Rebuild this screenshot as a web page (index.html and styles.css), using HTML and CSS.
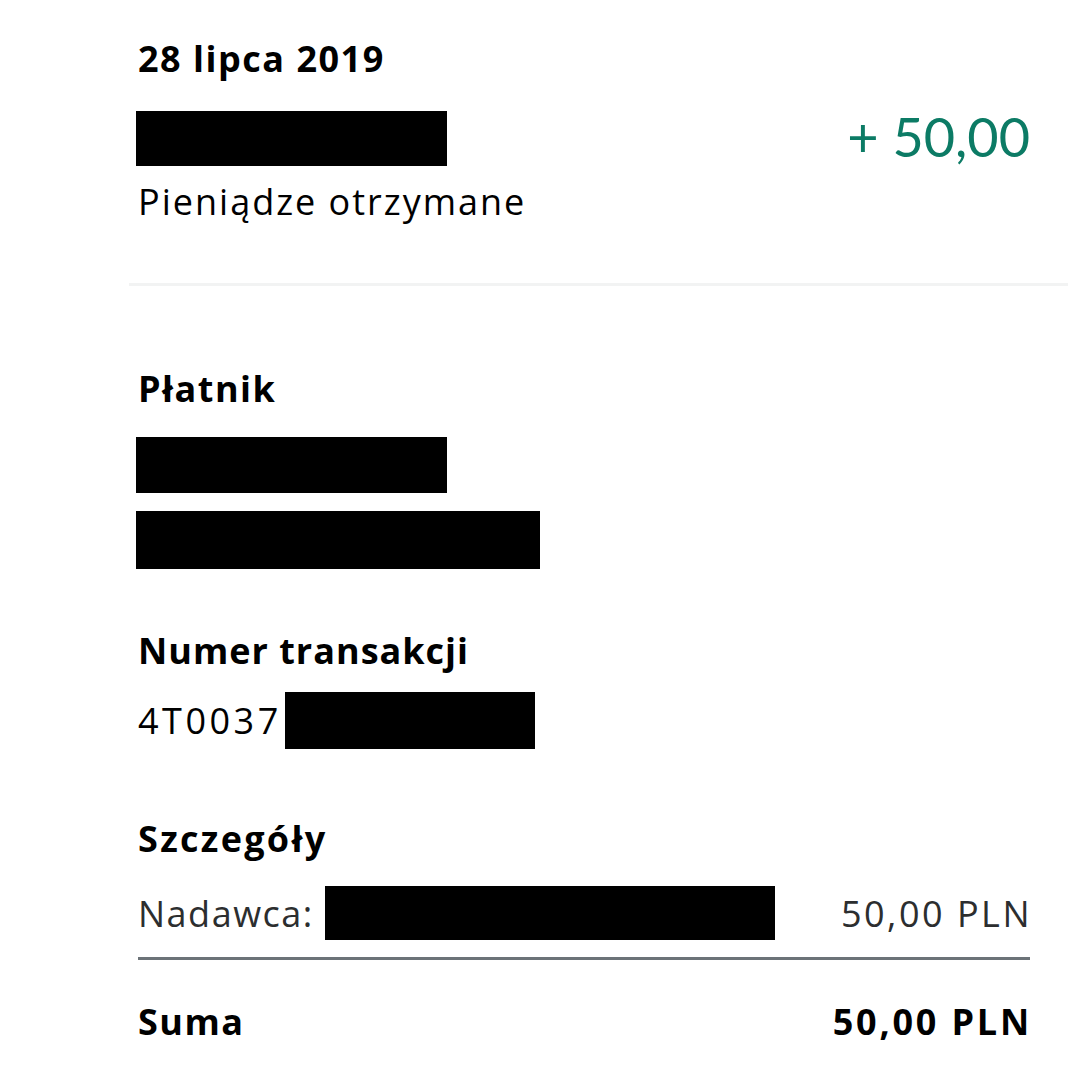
FILE: index.html
```html
<!DOCTYPE html>
<html lang="pl">
<head>
<meta charset="utf-8">
<link rel="stylesheet" href="styles.css">
</head>
<body>
<div class="page">
  <section class="summary">
    <h1 class="date">28 lipca 2019</h1>
    <div class="summary-row">
      <div class="summary-left">
        <div class="redact redact-name"></div>
        <div class="status">Pieniądze otrzymane</div>
      </div>
      <div class="amount">+ 50,00</div>
    </div>
  </section>
  <hr class="divider">
  <section class="block block-payer">
    <h2 class="label">Płatnik</h2>
    <div class="redact redact-a"></div>
    <div class="redact redact-b"></div>
  </section>
  <section class="block block-txn">
    <h2 class="label label-tight">Numer transakcji</h2>
    <div class="txn"><span class="txn-id">4T0037</span><span class="redact redact-txn"></span></div>
  </section>
  <section class="block block-details">
    <h2 class="label label-wide">Szczegóły</h2>
    <div class="detail-row">
      <div class="detail-left"><span class="detail-name">Nadawca:</span><span class="redact redact-sender"></span></div>
      <span class="money">50,00 PLN</span>
    </div>
    <div class="total-row">
      <span class="total-label">Suma</span>
      <span class="money money-bold">50,00 PLN</span>
    </div>
  </section>
</div>
</body>
</html>
```
FILE: styles.css
```css
* { box-sizing: border-box; }
body {
  margin: 0;
  background: #fff;
  font-family: "Open Sans", Lato, sans-serif;
  color: #000;
}
.page {
  width: 1080px;
  height: 1081px;
  overflow: hidden;
  padding: 0 50px 0 138px;
}
.summary { padding-top: 37px; }
.date, .label {
  margin: 0;
  font-size: 36px;
  font-weight: 700;
  line-height: 44px;
  letter-spacing: 1.5px;
}
.label-tight { letter-spacing: 1px; }
.label-wide { letter-spacing: 2.3px; }
.summary-row {
  display: flex;
  justify-content: space-between;
  align-items: flex-start;
  margin-top: 30px;
}
.redact { background: #000; display: block; }
.redact-name { width: 311px; height: 55px; margin-left: -2px; }
.status {
  font-size: 36px;
  line-height: 44px;
  letter-spacing: 2px;
  margin-top: 14px;
}
.amount {
  color: #0c7b65;
  font-family: Lato, sans-serif;
  font-size: 54px;
  line-height: 60px;
  margin-top: -4px;
}
.divider {
  border: 0;
  height: 3px;
  background: #f2f3f3;
  margin: 59px -38px 0 -9px;
}
.block-payer { margin-top: 81px; }
.redact-a { width: 311px; height: 56px; margin: 26px 0 0 -2px; }
.redact-b { width: 404px; height: 58px; margin: 18px 0 0 -2px; }
.block-txn { margin-top: 60px; }
.txn {
  display: flex;
  align-items: center;
  font-size: 36px;
  margin-top: 19px;
}
.txn-id { letter-spacing: 3.5px; }
.redact-txn { width: 250px; height: 57px; margin-left: 3px; }
.block-details { margin-top: 68px; }
.detail-row {
  display: flex;
  justify-content: space-between;
  align-items: center;
  font-size: 36px;
  color: #2c2e2f;
  margin-top: 25px;
  padding-bottom: 17px;
  border-bottom: 3px solid #6c7378;
}
.detail-left { display: flex; align-items: center; gap: 11px; }
.detail-name { letter-spacing: 1.5px; }
.redact-sender { width: 450px; height: 54px; }
.money { letter-spacing: 2.5px; margin-right: -2px; }
.total-row {
  display: flex;
  justify-content: space-between;
  font-size: 36px;
  font-weight: 700;
  line-height: 44px;
  margin-top: 40px;
}
.total-label { letter-spacing: 1.5px; }
.money-bold { letter-spacing: 2.8px; }
```
